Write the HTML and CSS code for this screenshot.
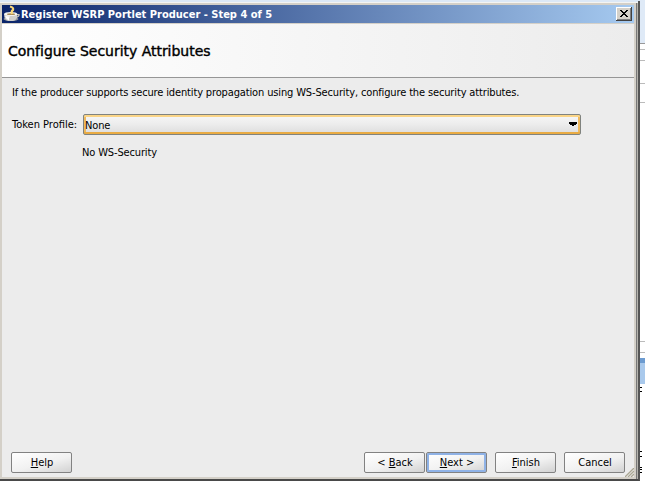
FILE: index.html
```
<!DOCTYPE html>
<html lang="en">
<head>
  <meta charset="UTF-8">
  <title>Register WSRP Portlet Producer</title>
  <link rel="stylesheet" href="styles.css">
</head>
<body>

<div class="desktop">
  <div class="window">
    <div class="titlebar">
      <svg class="cup" width="17" height="18" viewBox="0 0 17 18">
        <ellipse cx="8" cy="14" rx="7.500" ry="2" fill="#8d929b"/>
        <path d="M14 9.500h2q.5 2-3 3" fill="none" stroke="#c8c4b8" stroke-width="1.200"/>
        <path d="M1 9q0 6 4.500 7h4.500q4.500-1 4.500-7z" fill="#cfcecb"/>
        <path d="M2 11q1 3 4 4.500-.5-2.500 1-4z" fill="#fff"/>
        <ellipse cx="7.700" cy="9" rx="6.700" ry="2" fill="#f3f3f0"/>
        <ellipse cx="8" cy="9.200" rx="4" ry=".9" fill="#a88b58"/>
        <path d="M7 1.500q4 1 3 3.500-2 1-1 4" fill="none" stroke="#f8d578" stroke-width="2.200"/>
      </svg>
      <span class="title">Register WSRP Portlet Producer - Step 4 of 5</span>
      <button class="close" aria-label="Close">
        <svg width="8" height="7" viewBox="0 0 8 7" shape-rendering="crispEdges">
          <path d="M0 0h2v1h1v1h2v-1h1v-1h2v1h-1v1h-1v1h-1v1h1v1h1v1h1v1h-2v-1h-1v-1h-2v1h-1v1h-2v-1h1v-1h1v-1h1v-1h-1v-1h-1v-1h-1z"/>
        </svg>
      </button>
    </div>

    <div class="banner"><h1>Configure Security Attributes</h1></div>

    <div class="content">
      <p class="intro">If the producer supports secure identity propagation using WS-Security, configure the security attributes.</p>
      <div class="row">
        <label class="label">Token Profile:</label>
        <div class="select">
          <span>None</span>
          <svg width="8" height="4" viewBox="0 0 8 4" shape-rendering="crispEdges"><path d="M0 0h8v2h-1v1h-2v1h-2v-1h-2v-1h-1z"/></svg>
        </div>
      </div>
      <p class="note">No WS-Security</p>
    </div>

    <div class="buttons">
      <button class="btn help"><span><u>H</u>elp</span></button>
      <button class="btn back"><span>&lt; <u>B</u>ack</span></button>
      <button class="btn next"><span><u>N</u>ext &gt;</span></button>
      <button class="btn finish"><span><u>F</u>inish</span></button>
      <button class="btn cancel"><span>Cancel</span></button>
    </div>
    <svg class="grip" width="9" height="9" viewBox="0 0 9 9">
      <path d="M0 9L9 0M3 9L9 3M6 9L9 6" stroke="#aaa692" stroke-width="1.300"/>
    </svg>
  </div>

  <div class="behind">
    <div class="b-top"></div>
    <div class="b-rows"></div>
    <div class="b-sel"></div>
    <div class="b-list">
      <svg width="4" height="96" viewBox="0 0 4 96" shape-rendering="crispEdges">
        <path d="M0 3.500h2M0 7.500h2M0 67.500h2M0 72.500h2M0 83.500h2M0 85.500h2M0 88.500h2" stroke="#000"/>
      </svg>
    </div>
  </div>
</div>

</body>
</html>
```
FILE: styles.css
```
body {
  margin: 0;
  background: #fff;
  font-family: "DejaVu Sans Condensed", "DejaVu Sans", Tahoma, sans-serif;
  font-stretch: condensed;
  font-size: 11px;
  letter-spacing: -0.14px;
  color: #000;
}
.desktop {
  display: flex;
  width: 645px;
  height: 484px;
  overflow: hidden;
  background: linear-gradient(#dce8f6 2px, #fff 2px);
}
.window {
  position: relative;
  display: flex;
  flex-direction: column;
  box-sizing: border-box;
  width: 640px;
  height: 480px;
  margin-top: 1px;
  padding: 4px 4px 2px 2px;
  border-right: 2px solid #555;
  border-bottom: 2px solid #494949;
  background: #d4d0c8;
  box-shadow: inset 0 1px #dce8f6, inset 0 2px #f4f4f2, inset -1px 0 #b5b3ad, inset -2px 0 #777;
}
.titlebar {
  display: flex;
  align-items: center;
  height: 18px;
  background: linear-gradient(to right, #0a246a, #a6caf0);
  border-bottom: 1px solid #d4d0c8;
}
.cup {
  margin-left: 1px;
  margin-right: 1px;
}
.title {
  flex: 1;
  color: #fff;
  font-weight: bold;
  letter-spacing: 0;
  white-space: nowrap;
}
.close {
  display: flex;
  align-items: center;
  justify-content: center;
  width: 16px;
  height: 14px;
  margin-right: 2px;
  padding: 0 1px 1px 0;
  border: 0;
  background: #d4d0c8;
  box-shadow: inset -1px -1px #404040, inset 1px 1px #fff, inset -2px -2px #808080;
}
.banner {
  height: 53px;
  background: linear-gradient(to right, #fff, #ececec);
  border-bottom: 1px solid #969696;
}
h1 {
  margin: 0;
  padding: 19px 0 0 6px;
  font-family: "DejaVu Sans", Verdana, sans-serif;
  font-stretch: normal;
  font-size: 14px;
  line-height: 16px;
  font-weight: normal;
  letter-spacing: -0.03px;
  white-space: nowrap;
  -webkit-text-stroke: 0.4px #000;
}
.content {
  flex: 1;
  background: #ececec;
}
p {
  margin: 0;
  line-height: 14px;
  white-space: nowrap;
}
.intro {
  padding: 8px 0 0 10px;
}
.row {
  display: flex;
  align-items: center;
  margin-top: 14px;
  padding-left: 10px;
}
.label {
  width: 71px;
  letter-spacing: 0;
  white-space: nowrap;
}
.select {
  display: flex;
  align-items: center;
  justify-content: space-between;
  box-sizing: border-box;
  width: 498px;
  height: 21px;
  padding: 2px 3px 0 1px;
  border: 1px solid #80837f;
  border-radius: 2px;
  background: linear-gradient(#f7f7f7, #ececec 50%, #dcdcdc);
  box-shadow: inset 0 2px #fbd587, inset 0 -2px #e9ab43, inset 2px 0 #efb95e, inset -2px 0 #efb95e;
}
.select svg {
  margin-bottom: 4px;
}
.note {
  padding: 11px 0 0 80px;
}
.buttons {
  display: flex;
  height: 25px;
  padding: 0 9px 0 9px;
  background: #ececec;
}
.btn {
  box-sizing: border-box;
  width: 61px;
  height: 21px;
  padding: 0 0 0 1px;
  border: 1px solid #828282;
  border-radius: 2px;
  background: linear-gradient(165deg, #fff, #f1f1f1 55%, #d2d2d2);
  font: inherit;
  letter-spacing: 0;
  line-height: 17px;
  color: #000;
}
.help {
  margin-right: auto;
}
.next {
  margin-left: 1px;
  box-shadow: inset 0 0 0 2px #8fb2e6;
}
.finish {
  margin-left: 8px;
}
.cancel {
  margin-left: 8px;
}
.grip {
  position: absolute;
  right: 4px;
  bottom: 2px;
}
.behind {
  display: flex;
  flex-direction: column;
  width: 5px;
}
.b-top {
  height: 43px;
  background: #dfeaf7;
  border-bottom: 1px solid #999;
}
.b-rows {
  height: 314px;
  background: linear-gradient(#bbb, #bbb) 0 5px / 5px 1px no-repeat, linear-gradient(#bbb, #bbb) 0 16px / 5px 1px no-repeat, linear-gradient(#bbb, #bbb) 0 39px / 5px 1px no-repeat, linear-gradient(#bbb, #bbb) 0 58px / 5px 1px no-repeat, linear-gradient(#bbb, #bbb) 0 297px / 5px 1px no-repeat, linear-gradient(#bbb, #bbb) 0 308px / 5px 1px no-repeat, #fff;
}
.b-sel {
  height: 26px;
  background: linear-gradient(#6c9bd0 5px, #a9c9ec 5px);
}
```
